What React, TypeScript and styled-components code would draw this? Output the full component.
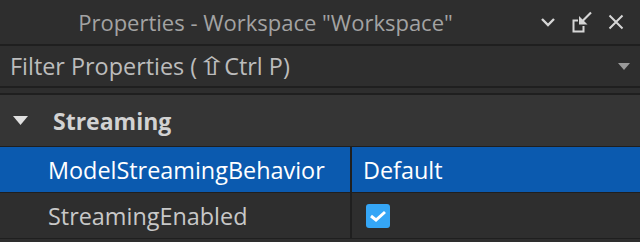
import React from "react";
import styled, { createGlobalStyle } from "styled-components";

const Global = createGlobalStyle`
  html, body { margin: 0; padding: 0; background: #2e2e2e; }
  * { box-sizing: border-box; }
`;

const Panel = styled.div`
  width: 640px;
  height: 242px;
  overflow: hidden;
  background: #2e2e2e;
  font-family: "Open Sans", "Noto Sans", "DejaVu Sans", sans-serif;
  display: flex;
  flex-direction: column;
`;

const TitleBar = styled.div`
  height: 46px;
  flex: none;
  display: flex;
  align-items: center;
  padding-right: 7px;
  border-bottom: 2px solid #1f1f1f;
`;

const Title = styled.div`
  flex: 1;
  text-align: center;
  color: #a3a3a3;
  font-size: 22px;
  line-height: 44px;
  white-space: nowrap;
`;

const IconButton = styled.div`
  width: 34px;
  height: 44px;
  display: flex;
  align-items: center;
  justify-content: center;
  color: #d6d6d6;
`;

const FilterBar = styled.div`
  height: 42px;
  flex: none;
  display: flex;
  align-items: center;
  padding: 0 10px;
  border-bottom: 2px solid #1f1f1f;
`;

const FilterText = styled.div`
  flex: 1;
  color: #bcbcbc;
  font-size: 23.4px;
  white-space: nowrap;
  display: flex;
  align-items: center;
`;

const Shift = styled.span`
  display: inline-block;
  width: 20px;
  margin: 0 3px 0 4px;
  text-align: center;
  font-family: "DejaVu Sans", sans-serif;
  font-size: 25px;
  transform: scaleX(1.45);
`;

const Spacer = styled.div`
  height: 7px;
  flex: none;
  border-bottom: 2px solid #1f1f1f;
`;

const SectionHeader = styled.div`
  height: 52px;
  flex: none;
  display: flex;
  align-items: center;
  background: #353535;
  border-bottom: 1px solid #1f1f1f;
  color: #d2d2d2;
  font-size: 23px;
  font-weight: 700;
`;

const Caret = styled.div`
  width: 53px;
  padding-left: 13px;
  display: flex;
  align-items: center;
`;

const Row = styled.div<{ $selected?: boolean }>`
  height: 46px;
  flex: none;
  display: grid;
  grid-template-columns: 350px 2px 1fr;
  background: ${(p) => (p.$selected ? "#0b5aaf" : "#2e2e2e")};
  border-bottom: 1px solid #1f1f1f;
  color: ${(p) => (p.$selected ? "#ffffff" : "#c8c8c8")};
  font-size: 23.4px;
`;

const NameCell = styled.div`
  display: flex;
  align-items: center;
  padding-left: 48px;
  white-space: nowrap;
`;

const Divider = styled.div`
  background: #1f1f1f;
`;

const ValueCell = styled.div`
  display: flex;
  align-items: center;
  padding-left: 11px;
  white-space: nowrap;
`;

const Checkbox = styled.div`
  width: 24px;
  height: 24px;
  margin-left: 3px;
  margin-top: 1px;
  border-radius: 3px;
  background: #35a6f6;
  display: flex;
  align-items: center;
  justify-content: center;
`;

export default function App() {
  return (
    <Panel>
      <Global />
      <TitleBar>
        <Title>Properties - Workspace "Workspace"</Title>
        <IconButton>
          <svg width="16" height="10" viewBox="0 0 16 10">
            <path d="M2 2 L8 8 L14 2" fill="none" stroke="currentColor" strokeWidth="2.4" />
          </svg>
        </IconButton>
        <IconButton>
          <svg width="22" height="22" viewBox="0 0 22 22">
            <path d="M7 9.5 H2.5 V20.5 H12.5 V15" fill="none" stroke="currentColor" strokeWidth="2" />
            <path d="M20 1.5 L10.5 11" fill="none" stroke="currentColor" strokeWidth="2.2" />
            <path d="M8 5 V13.5 H16.5 Z" fill="currentColor" />
          </svg>
        </IconButton>
        <IconButton>
          <svg width="16" height="16" viewBox="0 0 16 16">
            <path d="M1.5 1.5 L14.5 14.5 M14.5 1.5 L1.5 14.5" fill="none" stroke="currentColor" strokeWidth="2" />
          </svg>
        </IconButton>
      </TitleBar>
      <FilterBar>
        <FilterText>
          Filter Properties (<Shift>⇧</Shift>Ctrl P)
        </FilterText>
        <svg width="12" height="7" viewBox="0 0 12 7">
          <path d="M0 0 H12 L6 7 Z" fill="#9a9a9a" />
        </svg>
      </FilterBar>
      <Spacer />
      <SectionHeader>
        <Caret>
          <svg width="15" height="9" viewBox="0 0 15 9">
            <path d="M0 0 H15 L7.5 9 Z" fill="#e0e0e0" />
          </svg>
        </Caret>
        Streaming
      </SectionHeader>
      <Row $selected>
        <NameCell>ModelStreamingBehavior</NameCell>
        <Divider />
        <ValueCell>Default</ValueCell>
      </Row>
      <Row>
        <NameCell>StreamingEnabled</NameCell>
        <Divider />
        <ValueCell>
          <Checkbox>
            <svg width="18" height="14" viewBox="0 0 18 14">
              <path d="M2 7 L7 11 L16 3" fill="none" stroke="#ffffff" strokeWidth="3" />
            </svg>
          </Checkbox>
        </ValueCell>
      </Row>
    </Panel>
  );
}
